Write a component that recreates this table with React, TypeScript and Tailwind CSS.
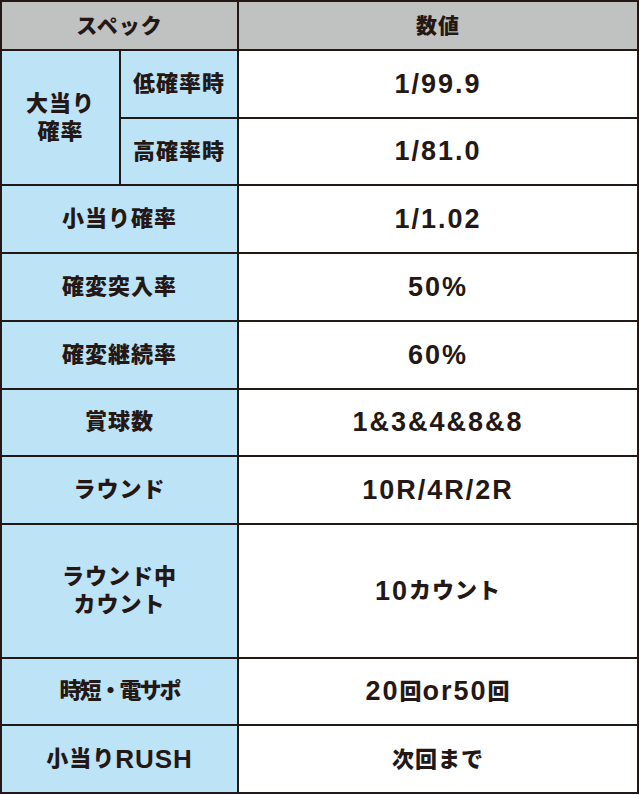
import React from 'react';

const label = "bg-[#bde3f7] flex items-center justify-center text-center text-[22px] tracking-[1px] leading-[28px]";
const value = "bg-white flex items-center justify-center text-center text-[27px] tracking-[2px]";
const ja = "text-[22px] tracking-[1px]";

const ROWS: { name: React.ReactNode; val: React.ReactNode }[] = [
  { name: '小当り確率', val: '1/1.02' },
  { name: '確変突入率', val: '50%' },
  { name: '確変継続率', val: '60%' },
  { name: '賞球数', val: '1&3&4&8&8' },
  { name: 'ラウンド', val: '10R/4R/2R' },
  { name: <>ラウンド中<br />カウント</>, val: <>10<span className={ja}>カウント</span></> },
  { name: <span className="tracking-[-2px]">時短・電サポ</span>, val: <>20<span className={ja}>回</span>or50<span className={ja}>回</span></> },
  { name: <>小当り<span className="text-[26px] tracking-[1px]">RUSH</span></>, val: <span className={ja}>次回まで</span> },
];

export default function App() {
  return (
    <div className="w-[640px] h-[795px] bg-white">
      <div className="w-[639px] h-[794px] bg-[#231815] p-[2px] grid gap-[2px] grid-cols-[117px_116px_1fr] grid-rows-[47px_repeat(7,minmax(0,1fr))_minmax(0,2fr)_repeat(2,minmax(0,1fr))] font-['Liberation_Sans','Noto_Sans_CJK_JP',sans-serif] font-black text-[#231815]">
        <div className="col-span-2 bg-[#c0c1c1] flex items-center justify-center text-[21px] tracking-[1px]">スペック</div>
        <div className="bg-[#c0c1c1] flex items-center justify-center text-[21px] tracking-[1px]">数値</div>

        <div className={`${label} row-span-2`}>大当り<br />確率</div>
        <div className={label}>低確率時</div>
        <div className={value}>1/99.9</div>
        <div className={label}>高確率時</div>
        <div className={value}>1/81.0</div>

        {ROWS.map((r, i) => (
          <React.Fragment key={i}>
            <div className={`${label} col-span-2`}>{r.name}</div>
            <div className={value}>{r.val}</div>
          </React.Fragment>
        ))}
      </div>
    </div>
  );
}
